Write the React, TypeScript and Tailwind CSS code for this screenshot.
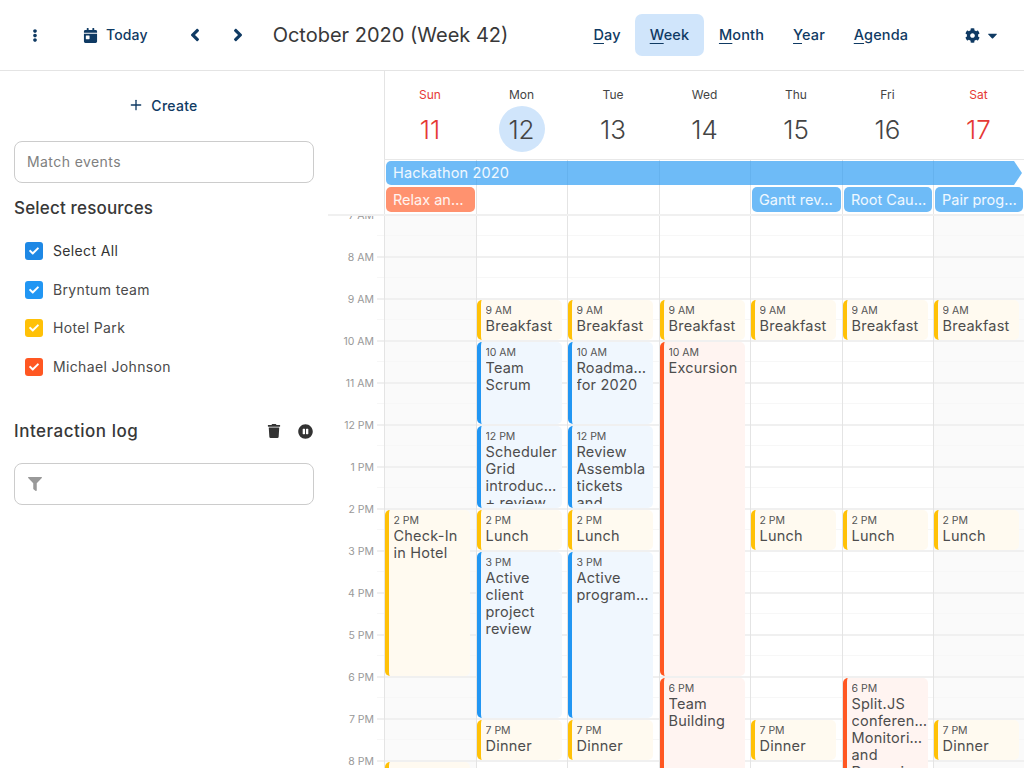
import { Plus } from 'lucide-react';
import {
  FaCalendarDay,
  FaAngleLeft,
  FaAngleRight,
  FaCaretDown,
  FaCheck,
  FaCog,
  FaEllipsisV,
  FaFilter,
  FaPauseCircle,
  FaTrash,
} from 'react-icons/fa';

type Tone = 'blue' | 'yellow' | 'orange';

type CalEvent = {
  start: number;
  end: number;
  time: string;
  tone: Tone;
  lines: string[];
};

const HOUR_HEIGHT = 42;
const HOURS = ['7 AM', '8 AM', '9 AM', '10 AM', '11 AM', '12 PM', '1 PM', '2 PM', '3 PM', '4 PM', '5 PM', '6 PM', '7 PM', '8 PM'];

// 640px split over seven days, rounded the way the reference's lines land
const COLS = 'grid-cols-[92px_91px_92px_91px_92px_91px_91px]';

const toneClass: Record<Tone, string> = {
  blue: 'bg-[#f0f7fe] border-[#2196f3]',
  yellow: 'bg-[#fffaf0] border-[#ffc107]',
  orange: 'bg-[#fff4f1] border-[#ff5722]',
};

const breakfast: CalEvent = { start: 9, end: 10, time: '9 AM', tone: 'yellow', lines: ['Breakfast'] };
const lunch: CalEvent = { start: 14, end: 15, time: '2 PM', tone: 'yellow', lines: ['Lunch'] };
const dinner: CalEvent = { start: 19, end: 20, time: '7 PM', tone: 'yellow', lines: ['Dinner'] };

const DAYS: { name: string; date: number; weekend?: boolean; today?: boolean; events: CalEvent[] }[] = [
  {
    name: 'Sun',
    date: 11,
    weekend: true,
    events: [
      { start: 14, end: 18, time: '2 PM', tone: 'yellow', lines: ['Check-In', 'in Hotel'] },
      { start: 20, end: 21, time: '8 PM', tone: 'yellow', lines: ['Dinner'] },
    ],
  },
  {
    name: 'Mon',
    date: 12,
    today: true,
    events: [
      breakfast,
      { start: 10, end: 12, time: '10 AM', tone: 'blue', lines: ['Team', 'Scrum'] },
      { start: 12, end: 14, time: '12 PM', tone: 'blue', lines: ['Scheduler', 'Grid', 'introduc…', '+ review'] },
      lunch,
      { start: 15, end: 19, time: '3 PM', tone: 'blue', lines: ['Active', 'client', 'project', 'review'] },
      dinner,
    ],
  },
  {
    name: 'Tue',
    date: 13,
    events: [
      breakfast,
      { start: 10, end: 12, time: '10 AM', tone: 'blue', lines: ['Roadma…', 'for 2020'] },
      { start: 12, end: 14, time: '12 PM', tone: 'blue', lines: ['Review', 'Assembla', 'tickets', 'and'] },
      lunch,
      { start: 15, end: 19, time: '3 PM', tone: 'blue', lines: ['Active', 'program…'] },
      dinner,
    ],
  },
  {
    name: 'Wed',
    date: 14,
    events: [
      breakfast,
      { start: 10, end: 18, time: '10 AM', tone: 'orange', lines: ['Excursion'] },
      { start: 18, end: 22, time: '6 PM', tone: 'orange', lines: ['Team', 'Building'] },
    ],
  },
  { name: 'Thu', date: 15, events: [breakfast, lunch, dinner] },
  {
    name: 'Fri',
    date: 16,
    events: [
      breakfast,
      lunch,
      { start: 18, end: 22, time: '6 PM', tone: 'orange', lines: ['Split.JS', 'conferen…', 'Monitori…', 'and', 'Dynamic'] },
    ],
  },
  { name: 'Sat', date: 17, weekend: true, events: [breakfast, lunch, dinner] },
];

function Header(): JSX.Element {
  return (
    <header className="flex h-[71px] shrink-0 items-center border-b border-[#e4e4e4] text-[#0f3a63]">
      <FaEllipsisV className="ml-[29px] w-[12px] text-[13px]" />
      <FaCalendarDay className="ml-[42px] text-[15px]" />
      <span className="ml-[8px] pb-[1px] text-[14px] font-medium tracking-[0.01em]">Today</span>
      <FaAngleLeft className="ml-[37px] text-[20px]" />
      <FaAngleRight className="ml-[23px] text-[20px]" />
      <h1 className="ml-[25px] text-[20px] text-[#383838]">October 2020 (Week 42)</h1>
      <nav className="ml-auto flex text-[14.5px] font-medium tracking-[0.01em]">
        <Tab width="w-[56px]" letter="D" rest="ay" />
        <Tab width="w-[69px]" letter="W" rest="eek" active />
        <Tab width="w-[75px]" letter="M" rest="onth" />
        <Tab width="w-[60px]" letter="Y" rest="ear" />
        <Tab width="w-[84px]" letter="A" rest="genda" />
      </nav>
      <FaCog className="ml-[42px] text-[15px]" />
      <FaCaretDown className="ml-[5px] mr-[24px] text-[15px]" />
    </header>
  );
}

function Tab({ width, letter, rest, active }: { width: string; letter: string; rest: string; active?: boolean }): JSX.Element {
  return (
    <button className={`${width} h-[42px] rounded-[7px] text-center ${active ? 'bg-[#d0e5fb]' : ''}`}>
      <span className="underline underline-offset-[3px] decoration-1">{letter}</span>
      {rest}
    </button>
  );
}

function Check({ color, label, strong }: { color: string; label: string; strong?: boolean }): JSX.Element {
  return (
    <label className="ml-[11px] flex h-[38.5px] items-center gap-[10px]">
      <span className={`flex h-[18px] w-[18px] items-center justify-center rounded-[3px] text-white ${color}`}>
        <FaCheck className="text-[10px]" />
      </span>
      <span className={`pb-[1px] text-[14px] tracking-[0.025em] ${strong ? 'text-[#333]' : 'text-[#4a4a4a]'}`}>{label}</span>
    </label>
  );
}

function Sidebar(): JSX.Element {
  return (
    <aside className="w-[328px] shrink-0 px-[14px]">
      <button className="flex h-[70px] w-full items-center justify-center gap-[7px] pb-[2px] pr-[2px] text-[14px] font-medium tracking-[0.02em] text-[#0f3a63]">
        <Plus size={16} strokeWidth={2} />
        Create
      </button>
      <div className="flex h-[42px] items-center rounded-[8px] border border-[#ccc] px-[12px] pb-[2px] text-[14px] tracking-[0.03em] text-[#808080]">
        Match events
      </div>
      <h2 className="mt-[14px] h-[22px] text-[17px] leading-[23px] font-medium tracking-[0.01em] text-[#383838]">Select resources</h2>
      <div className="mt-[13px]">
        <Check color="bg-[#1e88e5]" label="Select All" strong />
        <Check color="bg-[#2196f3]" label="Bryntum team" />
        <Check color="bg-[#ffc107]" label="Hotel Park" />
        <Check color="bg-[#ff5722]" label="Michael Johnson" />
      </div>
      <div className="mt-[33px] flex h-[24px] items-center text-[#333]">
        <h2 className="pt-[2px] text-[17px] font-medium tracking-[0.03em] text-[#383838]">Interaction log</h2>
        <FaTrash className="ml-auto text-[14px]" />
        <FaPauseCircle className="ml-[17px] mr-[1px] text-[15px]" />
      </div>
      <div className="mt-[20px] flex h-[42px] items-center rounded-[8px] border border-[#ccc] px-[13px] text-[#999]">
        <FaFilter className="text-[14px]" />
      </div>
    </aside>
  );
}

function DayHeader(): JSX.Element {
  return (
    <div className={`-ml-[1px] grid h-[89px] shrink-0 ${COLS} border-b border-[#e8e8e8]`}>
      {DAYS.map((d) => (
        <div key={d.name} className={`flex flex-col items-center ${d.weekend ? 'text-[#e53935]' : 'text-[#444]'}`}>
          <span className="mt-[17px] text-[12px] leading-[14px]">{d.name}</span>
          <span
            className={`mt-[4px] flex h-[46px] w-[46px] items-center justify-center rounded-full text-[26px] font-light ${d.today ? 'bg-[#d0e5fb]' : ''}`}
          >
            {d.date}
          </span>
        </div>
      ))}
    </div>
  );
}

function AllDayChip({ title, col, color }: { title: string; col: string; color: string }): JSX.Element {
  return (
    <div className={`${col} ${color} row-start-2 ml-[2px] mr-[1.4px] mt-[2px] flex h-[25px] items-center overflow-hidden rounded-[5px] px-[7px] text-[14.5px] whitespace-nowrap text-white/90`}>
      {title}
    </div>
  );
}

function AllDay(): JSX.Element {
  return (
    <div className="relative h-[54px] shrink-0">
      <div className={`absolute inset-0 grid ${COLS}`}>
        {DAYS.map((d) => (
          <div key={d.name} className="border-l border-[#e4e4e4]" />
        ))}
      </div>
      <div className={`relative grid ${COLS}`}>
        <div className="col-span-7 ml-[2px] mr-[2px] mt-[1px] flex h-[24px]">
          <div className="flex flex-1 items-center rounded-l-[5px] bg-[#2196f3]/65 px-[7px] text-[14.5px] tracking-[0.01em] text-white/90">
            Hackathon 2020
          </div>
          <svg viewBox="0 0 8 24" className="h-[24px] w-[8px] fill-[#2196f3]/65">
            <path d="M0 0 L8 12 L0 24 Z" />
          </svg>
        </div>
        <AllDayChip col="col-start-1" color="bg-[#ff5722]/65" title="Relax an…" />
        <AllDayChip col="col-start-5" color="bg-[#2196f3]/65" title="Gantt rev…" />
        <AllDayChip col="col-start-6" color="bg-[#2196f3]/65" title="Root Cau…" />
        <AllDayChip col="col-start-7" color="bg-[#2196f3]/65" title="Pair prog…" />
      </div>
    </div>
  );
}

function EventCard({ ev }: { ev: CalEvent }): JSX.Element {
  return (
    <div
      className={`absolute left-0 w-[85px] overflow-hidden rounded-[5px] border-l-4 pb-[4px] pl-[4.5px] pt-[5px] ${toneClass[ev.tone]}`}
      style={{ top: (ev.start - 7) * HOUR_HEIGHT + 2, height: (ev.end - ev.start) * HOUR_HEIGHT - 2 }}
    >
      <div className="h-full overflow-hidden whitespace-nowrap">
        <div className="text-[10.5px] leading-[12px] text-[#555]">{ev.time}</div>
        {ev.lines.map((line) => (
          <div key={line} className="text-[14.5px] leading-[17px] tracking-[0.015em] text-[#4d4d4d]">
            {line}
          </div>
        ))}
      </div>
    </div>
  );
}

function TimeGrid(): JSX.Element {
  return (
    <div className="min-h-0 flex-1 overflow-hidden border-t-2 border-[#f0f0f0]">
      <div className="-mt-[2px] flex">
        <div className="w-[56px] shrink-0">
          {HOURS.map((h) => (
            <div key={h} className="flex h-[42px] justify-end">
              <span className="-mt-[5px] text-[10.5px] leading-[14px] text-[#999]">{h}</span>
              <div className="ml-[3px] w-[7px] border-t-2 border-[#f0f0f0]">
                <div className="h-[20px] border-b border-[#f7f7f7]" />
              </div>
            </div>
          ))}
        </div>
        <div className={`grid flex-1 ${COLS}`}>
          {DAYS.map((d) => (
            <div key={d.name} className={`relative border-l border-[#e4e4e4] ${d.weekend ? 'bg-[#fafafa]' : ''}`}>
              {HOURS.map((h) => (
                <div key={h} className="h-[42px] border-t-2 border-[#f0f0f0]">
                  <div className="h-[20px] border-b border-[#f7f7f7]" />
                </div>
              ))}
              {d.events.map((ev) => (
                <EventCard key={ev.start} ev={ev} />
              ))}
            </div>
          ))}
        </div>
      </div>
    </div>
  );
}

export default function App(): JSX.Element {
  return (
    <div className="flex h-[768px] w-[1024px] flex-col overflow-hidden bg-white font-[Inter,sans-serif]">
      <Header />
      <div className="flex min-h-0 flex-1">
        <Sidebar />
        <main className="flex min-w-0 flex-1 flex-col">
          <div className="ml-[56px] flex shrink-0 flex-col border-l border-[#e4e4e4]">
            <DayHeader />
          </div>
          <div className="ml-[56px] shrink-0">
            <AllDay />
          </div>
          <TimeGrid />
        </main>
      </div>
    </div>
  );
}
